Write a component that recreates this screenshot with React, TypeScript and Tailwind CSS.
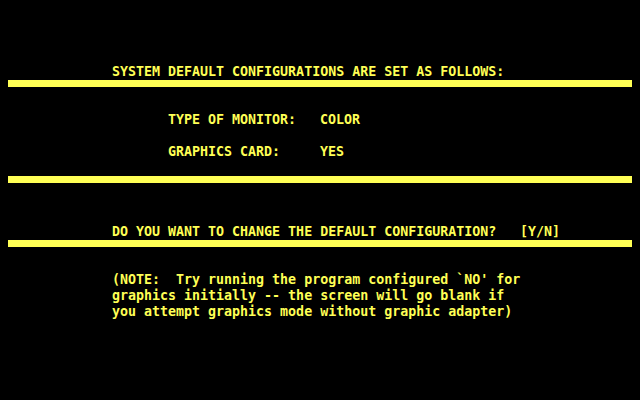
const Row = ({ children, className = "" }: { children: React.ReactNode; className?: string }) => (
  <div className={`h-4 leading-4 whitespace-pre ${className}`}>{children}</div>
);

const Bar = () => <div className="mx-2 h-[7px] bg-[#ffff55]" />;

export default function App() {
  return (
    <div
      className="w-[640px] h-[400px] bg-black text-[#ffff55] text-[13.3px] font-bold overflow-hidden pt-16"
      style={{ fontFamily: '"DejaVu Sans Mono", "Liberation Mono", monospace' }}
    >
      <Row className="pl-[112px]">SYSTEM DEFAULT CONFIGURATIONS ARE SET AS FOLLOWS:</Row>
      <Bar />

      <div className="mt-[25px] flex flex-col gap-4 pl-[168px]">
        <Row className="flex">
          <span className="w-[152px]">TYPE OF MONITOR:</span>
          <span>COLOR</span>
        </Row>
        <Row className="flex">
          <span className="w-[152px]">GRAPHICS CARD:</span>
          <span>YES</span>
        </Row>
      </div>

      <div className="mt-4">
        <Bar />
      </div>

      <Row className="mt-[41px] pl-[112px] flex">
        <span className="w-[408px]">DO YOU WANT TO CHANGE THE DEFAULT CONFIGURATION?</span>
        <span>[Y/N]</span>
      </Row>
      <Bar />

      <div className="mt-[25px] pl-[112px]">
        <Row>(NOTE:  Try running the program configured `NO' for</Row>
        <Row>graphics initially -- the screen will go blank if</Row>
        <Row>you attempt graphics mode without graphic adapter)</Row>
      </div>
    </div>
  );
}
